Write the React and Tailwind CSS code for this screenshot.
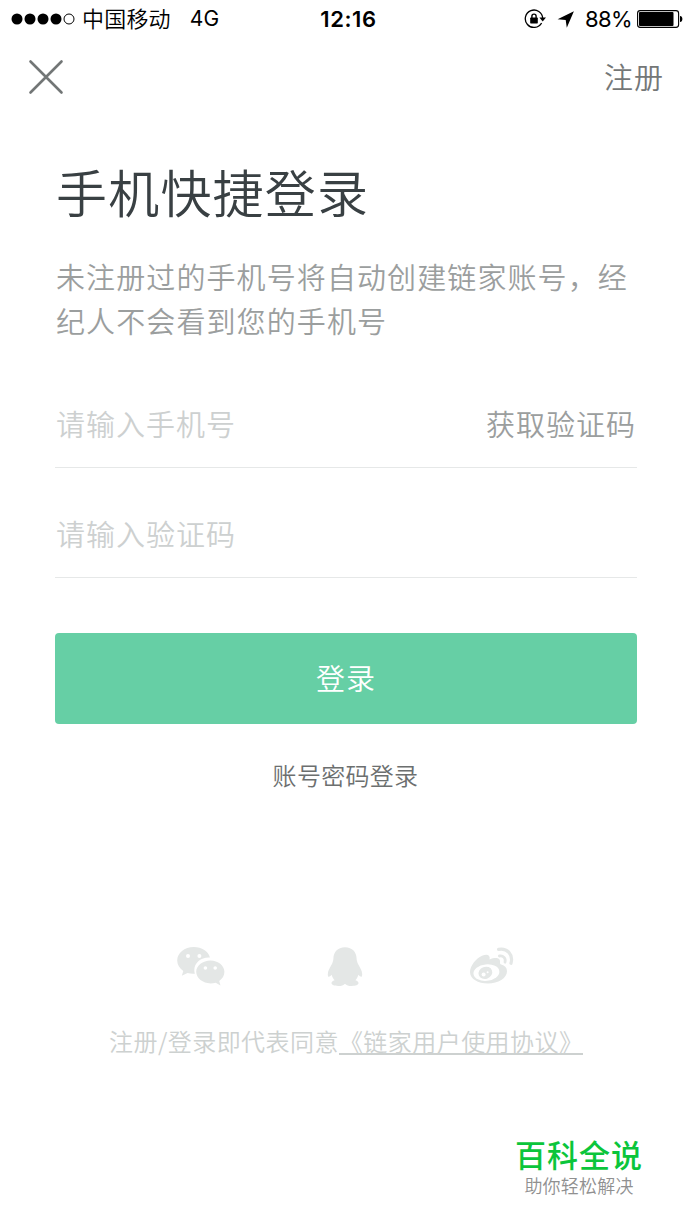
import React, { useState } from "react";

function SignalDots() {
  return (
    <svg width="64" height="14" viewBox="0 0 64 14">
      {[6, 19, 32, 45].map((cx) => (
        <circle key={cx} cx={cx} cy="7" r="5.5" fill="#000" />
      ))}
      <circle cx="58" cy="7" r="5" fill="none" stroke="#000" strokeWidth="1" />
    </svg>
  );
}

function RotationLock() {
  return (
    <svg width="22" height="20" viewBox="0 0 22 20" fill="none">
      <path d="M17.6 14A8.7 8.7 0 1 1 18.7 9.5" stroke="#000" strokeWidth="1.3" />
      <path d="M15.4 8.6h6.6l-3.300 3.900z" fill="#000" />
      <rect x="6.2" y="8.6" width="7.6" height="5.8" rx="0.6" fill="#000" />
      <path d="M7.9 9V7.200a2.100 2.100 0 0 1 4.200 0V9" stroke="#000" strokeWidth="1.4" />
    </svg>
  );
}

function LocationArrow() {
  return (
    <svg width="17" height="17" viewBox="0 0 17 17">
      <path d="M16.900.2 9.800 16.800 8.700 9 .6 8.200z" fill="#000" />
    </svg>
  );
}

function Battery() {
  return (
    <svg width="46" height="18" viewBox="0 0 46 18">
      <rect x="0.6" y="0.6" width="41" height="16.8" rx="2.6" fill="none" stroke="#000" strokeWidth="1.1" />
      <rect x="2" y="2" width="34.5" height="14" rx="1" fill="#000" />
      <path d="M43 6c1.8.2 2.4 1.4 2.4 3s-.6 2.8-2.4 3z" fill="#000" />
    </svg>
  );
}

function WechatIcon() {
  return (
    <svg width="48" height="39" viewBox="0 0 48 39" fill="currentColor">
      <path
        fillRule="evenodd"
        d="M16.8 0C7.5 0 .2 6 .2 13.6c0 4.3 2.3 7.8 6.1 10.5L4.8 28.8l5.7-2.8c2.1.5 4 .9 6.3.8h1.1c-.4-1.2-.6-2.4-.6-3.6 0-7.2 6.5-12.6 14.3-12.6h1.3C31.6 4.3 24.7 0 16.8 0zM11 7a2 2 0 1 1 0 4 2 2 0 0 1 0-4zm11.4 0a2 2 0 1 1 0 4 2 2 0 0 1 0-4z"
      />
      <path
        fillRule="evenodd"
        d="M47.4 24.8c0-6.3-6.3-11.4-13.9-11.4s-14.3 5.1-14.3 11.400S25.900 36.400 33.500 36.400c1.800 0 3.500-.2 5.200-.700l4.800 2.900-1.300-4.600c3.300-2.200 5.200-5.400 5.200-9.200zM28.400 19.200a1.800 1.800 0 1 1 0 3.600 1.800 1.800 0 0 1 0-3.600zm9.800 0a1.800 1.800 0 1 1 0 3.600 1.800 1.800 0 0 1 0-3.600z"
      />
    </svg>
  );
}

function QQIcon() {
  return (
    <svg width="36" height="40" viewBox="0 0 36 40" fill="currentColor">
      <path d="M18 .2C10.6.2 6.400 5.200 6.400 11.600c0 1.800-.6 3.400-1.200 5C3.600 20.200.8 23.200.8 27.200c0 1.500.3 2.600.9 2.600.8 0 2.100-1 2.900-2 .6 2.200 1.600 4 3 5.400-2 .6-3.100 1.500-3.100 2.900 0 2 3 2.900 6.700 2.900 3.200 0 5.400-.9 6.800-2.300 1.400 1.400 3.600 2.300 6.800 2.300 3.700 0 6.700-.9 6.700-2.900 0-1.400-1.100-2.300-3.100-2.900 1.400-1.400 2.400-3.200 3-5.400.8 1 2.100 2 2.900 2 .6 0 .9-1.100.9-2.600 0-4-2.800-7-4.400-10.600-.6-1.600-1.200-3.200-1.200-5C29.600 5.200 25.400.2 18 .2z" />
    </svg>
  );
}

function WeiboIcon() {
  return (
    <svg width="44" height="38" viewBox="0 0 44 38" fill="currentColor">
      <path d="M0 25C0 19 6 11.500 12 8.800c5-2.200 8.500-1 7.600 3.600 5.600-2.200 11-2 10.400 3 0 1.100.1 1.800 1.200 2.200 3.700 1.200 5.800 3.200 5.800 6.700C37 31.300 28 36.500 18 36.500S0 31.800 0 25z" />
      <ellipse cx="16.400" cy="25.600" rx="13" ry="8.200" transform="rotate(-6 16.400 25.600)" fill="#fff" />
      <ellipse cx="15.400" cy="25.800" rx="7" ry="6" transform="rotate(-20 15.400 25.800)" />
      <circle cx="13.600" cy="27.400" r="2" fill="#fff" />
      <circle cx="17.600" cy="25.200" r="1" fill="#fff" />
      <g fill="none" stroke="currentColor" strokeWidth="3.200" strokeLinecap="round">
        <path d="M28.600 2.400C37 .7 43.500 7.500 41 16.300" />
        <path d="M29.400 9c3.800-.7 6.700 2.200 5.600 6.200" strokeWidth="2.800" />
      </g>
    </svg>
  );
}

export default function App() {
  const [phone, setPhone] = useState("");
  const [code, setCode] = useState("");

  return (
    <div className="flex h-[1230px] w-[692px] flex-col overflow-hidden bg-white font-['Noto_Sans_CJK_SC',sans-serif]">
      {/* Status bar */}
      <header className="grid h-[38px] grid-cols-[1fr_auto_1fr] items-center pl-[11px] pr-[9px] text-[22px] leading-[38px] text-black">
        <div className="flex items-center">
          <SignalDots />
          <span className="-mt-[5px] ml-[7px] font-[350] tracking-[0.2px]">中国移动</span>
          <span className="ml-[19px] font-['Inter',sans-serif] text-[21px]">4G</span>
        </div>
        <span className="pl-[3px] font-['Inter',sans-serif] font-semibold tracking-[0.6px]">12:16</span>
        <div className="flex items-center justify-end">
          <RotationLock />
          <span className="ml-[11px]">
            <LocationArrow />
          </span>
          <span className="ml-[11px] mr-[5px] font-['Inter',sans-serif] tracking-[-0.6px]">88%</span>
          <Battery />
        </div>
      </header>

      <nav className="flex h-[78px] items-center justify-between pl-7 pr-7">
        <button aria-label="关闭">
          <svg width="36" height="36" viewBox="0 0 36 36" stroke="#727676" strokeWidth="2.6" strokeLinecap="round">
            <path d="M2.5 2.5 33.5 33.5M33.5 2.5 2.5 33.5" />
          </svg>
        </button>
        <button className="text-[29px] font-[350] tracking-[1px] text-[#747777]">注册</button>
      </nav>

      <main className="flex flex-col px-[55px] pt-[37px]">
        <h1 className="h-[76px] pl-px text-[51px] font-[350] leading-[76px] tracking-[1.2px] text-[#394043]">
          手机快捷登录
        </h1>
        <p className="mt-[25px] pl-px text-[29px] font-[350] leading-[44px] tracking-[1.1px] text-[#9b9e9e]">
          未注册过的手机号将自动创建链家账号，经
          <br />
          纪人不会看到您的手机号
        </p>

        <form className="flex flex-col" onSubmit={(e) => e.preventDefault()}>
          <div className="mt-[39px] flex h-[87px] items-center justify-between border-b border-[#e6e8e8]">
            <input
              className="w-[300px] pl-px text-[29px] font-[350] tracking-[1px] outline-none placeholder:text-[#cdd0d0]"
              placeholder="请输入手机号"
              value={phone}
              onChange={(e) => setPhone(e.target.value)}
            />
            <button type="button" className="mr-px text-[29px] font-[350] tracking-[1px] text-[#9b9e9e]">
              获取验证码
            </button>
          </div>
          <div className="mt-[22px] flex h-[88px] items-center border-b border-[#e6e8e8]">
            <input
              className="w-full pl-px text-[29px] font-[350] tracking-[1px] outline-none placeholder:text-[#cdd0d0]"
              placeholder="请输入验证码"
              value={code}
              onChange={(e) => setCode(e.target.value)}
            />
          </div>
          <button className="mt-[55px] h-[91px] rounded-[4px] bg-[#66cfa5] pb-[2px] text-[29px] font-[350] tracking-[1px] text-white">
            登录
          </button>
        </form>

        <button className="mt-[33px] h-[36px] self-center pr-px text-[24px] font-[350] leading-[36px] tracking-[0.3px] text-[#6c6f6f]">
          账号密码登录
        </button>
      </main>

      <section className="mt-[154px] flex h-[44px] items-start pl-[177px] text-[#e4e7e6]">
        <WechatIcon />
        <span className="ml-[102px]">
          <QQIcon />
        </span>
        <span className="ml-[107px]">
          <WeiboIcon />
        </span>
      </section>

      <p className="mt-[32px] flex pl-[109px] text-[24px] font-[350] leading-[36px] tracking-[0.45px] text-[#cdd1d0]">
        注册/登录即代表同意
        <a className="h-[32px] border-b-2 border-[#cdd1d0]">《链家用户使用协议》</a>
      </p>

      <footer className="mr-[49px] mt-[77px] flex w-[128px] flex-col items-center self-end">
        <strong className="text-[31px] font-medium leading-[36px] tracking-[1px] text-[#0bc53b]">百科全说</strong>
        <span className="text-[18px] font-[350] leading-[26px] tracking-[0.2px] text-[#909090]">助你轻松解决</span>
      </footer>
    </div>
  );
}
